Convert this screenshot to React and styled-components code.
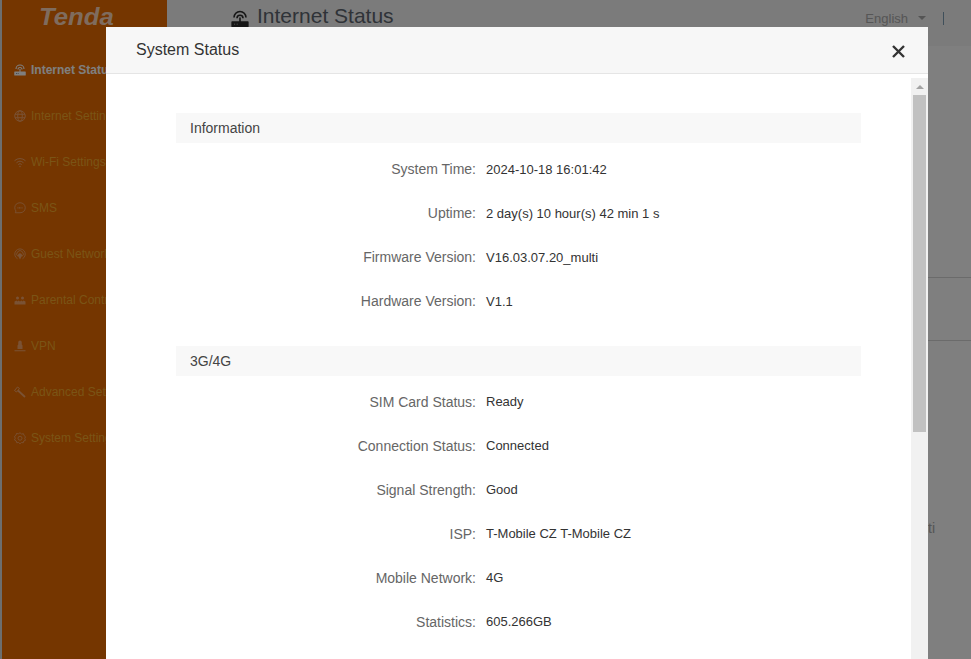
import React from 'react';
import styled, { createGlobalStyle } from 'styled-components';

const GlobalStyle = createGlobalStyle`
  html, body {
    margin: 0;
    height: 100%;
    overflow: hidden;
    background: #fff;
    font-family: "Liberation Sans", Arial, sans-serif;
  }
  * {
    box-sizing: border-box;
  }
`;

const Page = styled.div`
  display: flex;
  height: 659px;
  padding-left: 2px;
  background: #d8dcdc;
`;

const Sidebar = styled.aside`
  flex: 0 0 165px;
  display: flex;
  flex-direction: column;
  background: #ea6c00;
`;

const Logo = styled.div`
  height: 47px;
  padding: 2px 0 0 37px;
  font-size: 24px;
  font-weight: 700;
  font-style: italic;
  line-height: 30px;
  color: #ffd8bc;
  transform: scaleX(1.07);
  transform-origin: 37px 0;
`;

const Menu = styled.nav`
  display: flex;
  flex-direction: column;
`;

const MenuItem = styled.div`
  display: flex;
  align-items: center;
  gap: 5px;
  height: 46px;
  padding-left: 12px;
  font-size: 12px;
  white-space: nowrap;
  font-weight: ${({ $active }) => ($active ? 700 : 400)};
  color: ${({ $active }) => ($active ? '#fff' : '#f5a82c')};

  svg {
    flex: 0 0 12px;
    width: 12px;
    height: 12px;
    color: ${({ $active }) => ($active ? '#fff' : '#f4a468')};
  }
`;

const Main = styled.main`
  flex: 1;
  display: flex;
  flex-direction: column;
  background: #fff;
`;

const TopBar = styled.header`
  display: flex;
  align-items: flex-start;
  height: 46px;
  padding: 3px 0 0 64px;
  background: #f6f6f6;
`;

const PageTitle = styled.h1`
  display: flex;
  align-items: center;
  gap: 8px;
  flex: 1;
  margin: 0;
  font-size: 21px;
  font-weight: 400;
  line-height: 26px;
  color: #5f6670;

  svg {
    width: 18px;
    height: 18px;
    margin-top: 5px;
    color: #2c2c2c;
  }
`;

const Language = styled.div`
  display: flex;
  align-items: center;
  gap: 10px;
  height: 30px;
  margin-right: 27px;
  font-size: 13px;
  color: #acacac;
`;

const Caret = styled.span`
  width: 0;
  height: 0;
  border-left: 4px solid transparent;
  border-right: 4px solid transparent;
  border-top: 4px solid #a8a8a8;
`;

const Divider = styled.span`
  width: 1px;
  height: 13px;
  margin-left: 7px;
  background: #7f9fb5;
`;

const Panel = styled.section`
  flex: 0 0 ${({ $height }) => $height}px;
  border-bottom: 1px solid #d6d6d6;
`;

const PanelNote = styled.p`
  margin: 179px 36px 0 0;
  font-size: 14px;
  text-align: right;
  color: #aaa;
`;

const Overlay = styled.div`
  position: fixed;
  inset: 0;
  background: rgba(0, 0, 0, 0.5);
`;

const Modal = styled.div`
  position: fixed;
  top: 27px;
  left: 106px;
  width: 822px;
  height: 673px;
  display: flex;
  flex-direction: column;
  background: #fff;
`;

const ModalHeader = styled.div`
  display: flex;
  align-items: center;
  justify-content: space-between;
  flex: 0 0 47px;
  margin-bottom: 4px;
  padding: 0 23px 0 30px;
  background: #f7f7f7;
  border-bottom: 1px solid #e5e5e5;
`;

const ModalTitle = styled.h2`
  margin: 0;
  font-size: 16px;
  font-weight: 400;
  color: #333;
`;

const CloseIcon = styled.svg`
  width: 13px;
  height: 13px;
  margin-top: 3px;
  color: #333;
`;

const ModalBody = styled.div`
  flex: 1;
  min-height: 0;
  display: flex;
`;

const Content = styled.div`
  flex: 1;
  padding: 35px 50px 0 70px;
`;

const ScrollBar = styled.div`
  flex: 0 0 17px;
  display: flex;
  flex-direction: column;
  align-items: center;
  background: #f1f1f1;
`;

const ScrollUp = styled.div`
  width: 0;
  height: 0;
  margin-top: 7px;
  border-left: 4px solid transparent;
  border-right: 4px solid transparent;
  border-bottom: 4px solid #a3a3a3;
`;

const ScrollThumb = styled.div`
  flex: 0 0 337px;
  width: 13px;
  margin-top: 6px;
  background: #c1c1c1;
`;

const Section = styled.section`
  margin-bottom: 23px;
`;

const SectionHead = styled.div`
  height: 30px;
  margin-bottom: 4px;
  padding-left: 14px;
  font-size: 14px;
  line-height: 30px;
  color: #444;
  background: #f8f8f8;
`;

const Row = styled.div`
  display: grid;
  grid-template-columns: 300px 1fr;
  column-gap: 10px;
  align-items: center;
  height: 44px;
`;

const Label = styled.span`
  font-size: 14px;
  text-align: right;
  color: #666;
`;

const Value = styled.span`
  margin-bottom: ${({ $raised }) => ($raised ? 2 : 0)}px;
  font-size: 13px;
  color: #333;
`;

const RouterIcon = () => (
  <svg viewBox="0 0 24 24" fill="none" stroke="currentColor">
    <path d="M4 10a8 8 0 0 1 16 0M8 11a4 4 0 0 1 8 0" strokeWidth="2.200" />
    <path d="M12 10v6" strokeWidth="2.200" />
    <path
      d="M1.500 15h21a1 1 0 0 1 1 1v6a1 1 0 0 1-1 1h-21a1 1 0 0 1-1-1v-6a1 1 0 0 1 1-1z"
      fill="currentColor"
      stroke="none"
    />
    <path d="M4 19h1.500M7.500 19H9" stroke="#777" strokeWidth="2" />
  </svg>
);

const GlobeIcon = () => (
  <svg viewBox="0 0 24 24" fill="none" stroke="currentColor" strokeWidth="2">
    <circle cx="12" cy="12" r="10.500" />
    <ellipse cx="12" cy="12" rx="4.500" ry="10.500" />
    <path d="M2 8.500h20M2 15.500h20" />
  </svg>
);

const WifiIcon = () => (
  <svg viewBox="0 0 24 24" fill="none" stroke="currentColor" strokeWidth="2">
    <path d="M1 9.500a16 16 0 0 1 22 0M5 13.500a10.500 10.500 0 0 1 14 0M8.500 17a5 5 0 0 1 7 0" />
    <circle cx="12" cy="21" r="1.500" fill="currentColor" stroke="none" />
  </svg>
);

const SmsIcon = () => (
  <svg viewBox="0 0 24 24" fill="none" stroke="currentColor" strokeWidth="1.800">
    <path d="M12 1.500c6 0 10.500 4 10.500 10s-4.500 10-10.500 10H2.500l1.500-3.500C2.500 16 1.500 14 1.500 11.500c0-6 4.500-10 10.500-10z" />
    <path d="M7 11.500h10" strokeDasharray="2 1" strokeWidth="2.500" />
  </svg>
);

const GuestIcon = () => (
  <svg viewBox="0 0 24 24" fill="none" stroke="currentColor" strokeWidth="1.800">
    <path d="M7 21.500a10.500 10.500 0 1 1 10 0" />
    <path d="M8 17a6.500 6.500 0 1 1 8 0" />
    <path d="M12 23l-3.500-6.500a4 4 0 1 1 7 0z" fill="currentColor" stroke="none" />
  </svg>
);

const ParentalIcon = () => (
  <svg viewBox="0 0 24 24" fill="currentColor">
    <circle cx="7" cy="8" r="3" />
    <circle cx="17" cy="8" r="3" />
    <path d="M1 21v-6l4-2 2 2 2-2 3 2 3-2 2 2 2-2 4 2v6z" />
  </svg>
);

const VpnIcon = () => (
  <svg viewBox="0 0 24 24" fill="currentColor">
    <path d="M12 1a3.500 3.500 0 0 1 3.500 3.500V9l1.500 2v7H7v-7l1.500-2V4.500A3.500 3.500 0 0 1 12 1z" />
    <path d="M1 21.500h22" stroke="currentColor" strokeWidth="2" />
  </svg>
);

const ToolIcon = () => (
  <svg viewBox="0 0 24 24" fill="none" stroke="currentColor" strokeWidth="2">
    <path d="M1 9l6-7 4 3-6 7z" />
    <path d="M8 9l14 13" strokeWidth="3.500" />
  </svg>
);

const GearIcon = () => (
  <svg viewBox="0 0 24 24" fill="none" stroke="currentColor" strokeWidth="1.800">
    <path d="M12 1.500l3 2.500 4-.5 1 3.500 3 2.500-1.500 3.500 1.500 3.500-3.500 1.500-1 3.500-3.500-.5-3 2.500-3-2.500-3.500.5-1-3.500L1 16l1.500-3.500L1 9l3-2.500 1-3.500 4 .5z" />
    <circle cx="12" cy="12.500" r="4" />
  </svg>
);

const menu = [
  { label: 'Internet Status', Icon: RouterIcon, active: true },
  { label: 'Internet Settings', Icon: GlobeIcon },
  { label: 'Wi-Fi Settings', Icon: WifiIcon },
  { label: 'SMS', Icon: SmsIcon },
  { label: 'Guest Network', Icon: GuestIcon },
  { label: 'Parental Control', Icon: ParentalIcon },
  { label: 'VPN', Icon: VpnIcon },
  { label: 'Advanced Settings', Icon: ToolIcon },
  { label: 'System Settings', Icon: GearIcon },
];

const sections = [
  {
    title: 'Information',
    rows: [
      ['System Time:', '2024-10-18 16:01:42'],
      ['Uptime:', '2 day(s) 10 hour(s) 42 min 1 s'],
      ['Firmware Version:', 'V16.03.07.20_multi'],
      ['Hardware Version:', 'V1.1'],
    ],
  },
  {
    title: '3G/4G',
    raised: true,
    rows: [
      ['SIM Card Status:', 'Ready'],
      ['Connection Status:', 'Connected'],
      ['Signal Strength:', 'Good'],
      ['ISP:', 'T-Mobile CZ T-Mobile CZ'],
      ['Mobile Network:', '4G'],
      ['Statistics:', '605.266GB'],
    ],
  },
];

export default function App() {
  return (
    <>
      <GlobalStyle />
      <Page>
        <Sidebar>
          <Logo>Tenda</Logo>
          <Menu>
            {menu.map(({ label, Icon, active }) => (
              <MenuItem key={label} $active={active}>
                <Icon />
                {label}
              </MenuItem>
            ))}
          </Menu>
        </Sidebar>
        <Main>
          <TopBar>
            <PageTitle>
              <RouterIcon />
              Internet Status
            </PageTitle>
            <Language>
              English
              <Caret />
              <Divider />
            </Language>
          </TopBar>
          <Panel $height={232} />
          <Panel $height={63} />
          <PanelNote>Multi</PanelNote>
        </Main>
      </Page>
      <Overlay />
      <Modal>
        <ModalHeader>
          <ModalTitle>System Status</ModalTitle>
          <CloseIcon viewBox="0 0 13 13" fill="none" stroke="currentColor" strokeWidth="2.400">
            <path d="M1 1l11 11M12 1L1 12" />
          </CloseIcon>
        </ModalHeader>
        <ModalBody>
          <Content>
            {sections.map((section) => (
              <Section key={section.title}>
                <SectionHead>{section.title}</SectionHead>
                {section.rows.map(([label, value]) => (
                  <Row key={label}>
                    <Label>{label}</Label>
                    <Value $raised={section.raised}>{value}</Value>
                  </Row>
                ))}
              </Section>
            ))}
          </Content>
          <ScrollBar>
            <ScrollUp />
            <ScrollThumb />
          </ScrollBar>
        </ModalBody>
      </Modal>
    </>
  );
}
